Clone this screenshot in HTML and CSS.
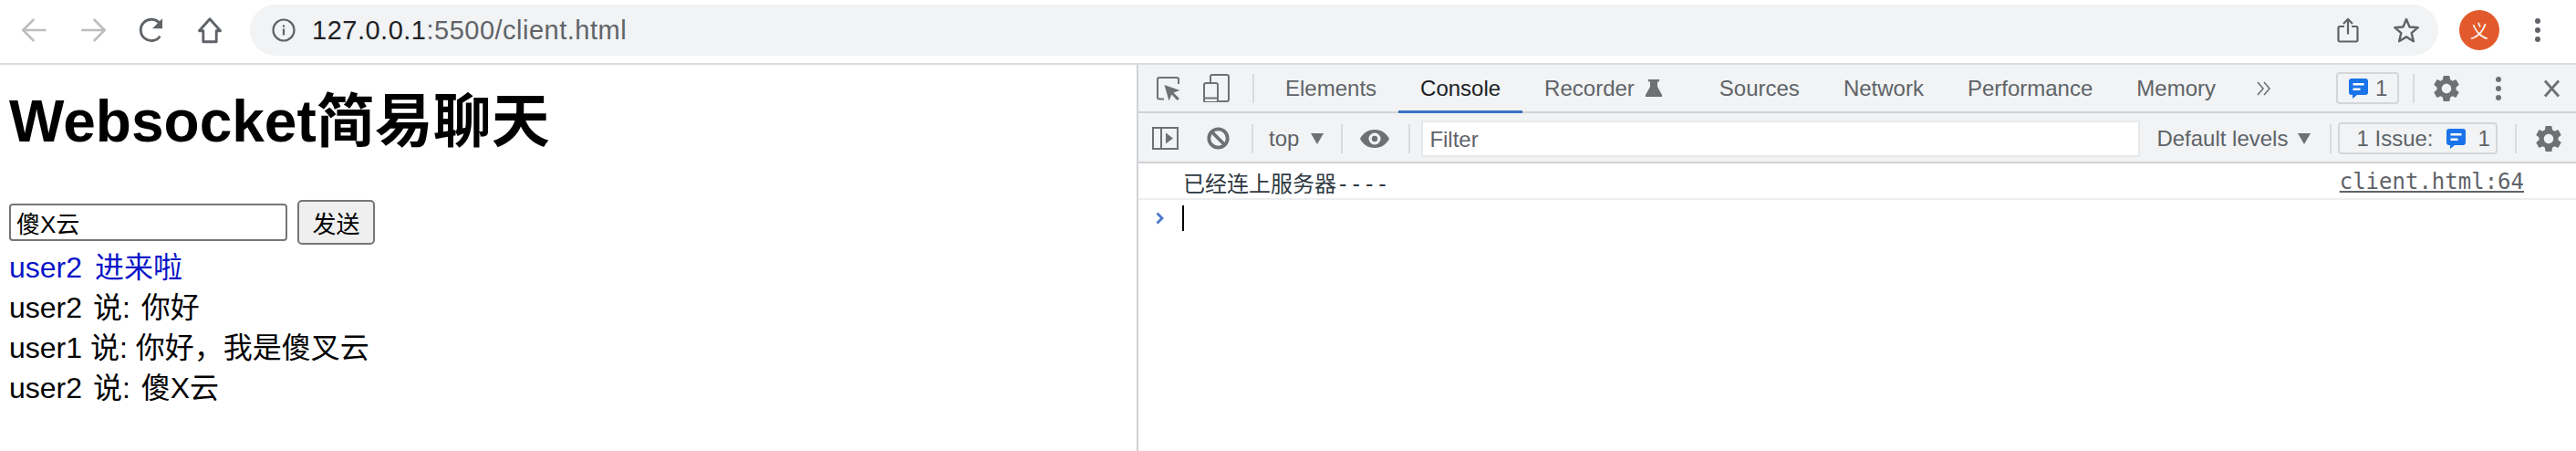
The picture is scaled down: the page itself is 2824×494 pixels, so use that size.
FILE: index.html
```html
<!DOCTYPE html>
<html lang="zh">
<head>
<meta charset="utf-8">
<title>client</title>
<link rel="stylesheet" href="styles.css">
</head>
<body>
<header class="chrome">
  <div class="nav">
    <svg viewBox="0 0 24 24" width="36" height="36"><path d="M20.500 12H4M11.500 4 3.500 12l8 8" fill="none" stroke="#bcbdbf" stroke-width="1.700"/></svg>
    <svg viewBox="0 0 24 24" width="36" height="36"><path d="M3.500 12H20M12.500 4l8 8-8 8" fill="none" stroke="#bcbdbf" stroke-width="1.700"/></svg>
    <svg viewBox="0 0 24 24" width="36" height="36"><path d="M18.300 16.500a7.800 7.800 0 1 1-.3-9.500" fill="none" stroke="#5f6368" stroke-width="1.900"/><path d="M20 3.500v7.300h-7.300z" fill="#5f6368"/></svg>
    <svg viewBox="0 0 24 24" width="36" height="36"><path d="M12 3.800 4.300 12.500H7.200v8h9.600v-8h2.900z" fill="none" stroke="#5f6368" stroke-width="1.900" stroke-linejoin="round"/></svg>
  </div>
  <div class="omnibox">
    <svg viewBox="0 0 26 26" width="26" height="26"><circle cx="13" cy="13" r="11.500" fill="none" stroke="#5f6368" stroke-width="2.200"/><path d="M11.900 7.500h2.200v2.200h-2.200zM11.900 11.500h2.200v7h-2.200z" fill="#5f6368"/></svg>
    <span class="url"><span class="host">127.0.0.1</span>:5500/client.html</span>
    <span class="omni-end">
      <svg viewBox="0 0 24 28" width="24" height="28"><path d="M8 10H3a1.500 1.500 0 0 0-1.500 1.500v13.500a1.500 1.500 0 0 0 1.500 1.500h18a1.500 1.500 0 0 0 1.500-1.500V11.500A1.500 1.500 0 0 0 21 10h-5M12 18.500V2.500M7 7l5-5 5 5" fill="none" stroke="#5f6368" stroke-width="2.200"/></svg>
      <svg viewBox="0 0 30 30" width="30" height="30"><path d="m15 3 3.500 8.500 9.200.7-7 6 2.200 9L15 22.400l-7.900 4.800 2.200-9-7-6 9.200-.7z" fill="none" stroke="#5f6368" stroke-width="2.400" stroke-linejoin="round"/></svg>
    </span>
  </div>
  <div class="avatar">义</div>
  <svg class="menu" viewBox="0 0 6 26" width="6" height="26"><circle cx="3" cy="3" r="3"/><circle cx="3" cy="13" r="3"/><circle cx="3" cy="23" r="3"/></svg>
</header>
<div class="split">
  <main class="page">
    <h1>Websocket简易聊天</h1>
    <div class="form"><input class="field" value="傻X云"><button class="send">发送</button></div>
    <div class="msgs">
      <div class="join">user2 进来啦</div>
      <div class="wide">user2 说: 你好</div>
      <div>user1 说: 你好，我是傻叉云</div>
      <div class="wide">user2 说: 傻X云</div>
    </div>
  </main>
  <section class="devtools">
    <div class="tabs">
      <div class="tool-icons">
        <svg viewBox="0 0 26 26" width="26" height="26"><path d="M8 24.500H3a2 2 0 0 1-2-2V3a2 2 0 0 1 2-2h19a2 2 0 0 1 2 2v5" fill="none" stroke="#6e7073" stroke-width="2"/><path d="m8.500 9 17 6-7 2.500 6.500 6.500-2.500 2-6-6.500-3 7z" fill="#6e7073"/></svg>
        <svg viewBox="0 0 29 31" width="29" height="31"><path d="M8 10V3a2 2 0 0 1 2-2h16a2 2 0 0 1 2 2v25a2 2 0 0 1-2 2H17" fill="none" stroke="#6e7073" stroke-width="2"/><path d="M3 10h11a2 2 0 0 1 2 2v17a2 2 0 0 1-2 2H3a2 2 0 0 1-2-2V12a2 2 0 0 1 2-2zM1 26.500h15" fill="none" stroke="#6e7073" stroke-width="2"/></svg>
        <i class="sep"></i>
      </div>
      <span class="tab">Elements</span>
      <span class="tab active">Console</span>
      <span class="tab recorder">Recorder <svg viewBox="0 0 18 19" width="18" height="19"><path d="M3 0h12v2.500h-2v5.500l5 9v2H0v-2l5-9V2.500H3z" fill="#6e7073"/></svg></span>
      <span class="tab">Sources</span>
      <span class="tab">Network</span>
      <span class="tab">Performance</span>
      <span class="tab">Memory</span>
      <svg class="more" viewBox="0 0 15 16" width="15" height="16"><path d="m1 1 6 7-6 7M8 1l6 7-6 7" fill="none" stroke="#6e7073" stroke-width="1.600"/></svg>
      <span class="tabs-end">
        <span class="badge top-badge"><svg viewBox="0 0 21 22" width="21" height="22"><path d="M3 0h15a3 3 0 0 1 3 3v12a3 3 0 0 1-3 3H9l-5 4v-4H3a3 3 0 0 1-3-3V3a3 3 0 0 1 3-3z" fill="#1a73e8"/><path d="M4.500 5h12v2.500h-12zM4.500 10.500h8V13h-8z" fill="#fff"/></svg>1</span>
        <i class="sep"></i>
        <svg class="gear" viewBox="2.400 2.400 19.200 19.200" width="28" height="28"><path fill="#6e7073" d="M19.140,12.940c0.040-0.300,0.060-0.610,0.060-0.940c0-0.320-0.020-0.640-0.070-0.940l2.030-1.580c0.180-0.140,0.230-0.410,0.120-0.610l-1.920-3.320c-0.120-0.220-0.370-0.290-0.590-0.220l-2.390,0.960c-0.500-0.380-1.030-0.700-1.620-0.940L14.400,2.810c-0.040-0.240-0.240-0.410-0.480-0.410h-3.840c-0.240,0-0.430,0.170-0.470,0.410L9.250,5.350C8.660,5.590,8.120,5.920,7.630,6.290L5.240,5.330c-0.220-0.080-0.470,0-0.590,0.220L2.740,8.870C2.620,9.080,2.660,9.340,2.860,9.480l2.030,1.580C4.840,11.360,4.800,11.690,4.800,12s0.020,0.640,0.070,0.940l-2.030,1.580c-0.180,0.140-0.230,0.410-0.120,0.610l1.920,3.320c0.120,0.220,0.370,0.290,0.590,0.220l2.390-0.960c0.500,0.380,1.030,0.700,1.620,0.940l0.360,2.540c0.050,0.240,0.240,0.410,0.480,0.410h3.840c0.240,0,0.440-0.170,0.470-0.410l0.360-2.540c0.590-0.240,1.130-0.560,1.620-0.940l2.390,0.960c0.220,0.080,0.470,0,0.590-0.220l1.920-3.320c0.120-0.220,0.070-0.470-0.120-0.610L19.140,12.940z M12,15.600c-1.980,0-3.600-1.620-3.600-3.600s1.620-3.600,3.600-3.600s3.600,1.620,3.600,3.600S13.980,15.600,12,15.600z"/></svg>
        <svg class="dots" viewBox="0 0 6 26" width="6" height="26"><circle cx="3" cy="3" r="3"/><circle cx="3" cy="13" r="3"/><circle cx="3" cy="23" r="3"/></svg>
        <svg viewBox="0 0 19 20" width="19" height="20"><path d="m2 1.500 15 17M17 1.500l-15 17" stroke="#6e7073" stroke-width="2.800" fill="none"/></svg>
      </span>
    </div>
    <div class="filterbar">
      <svg viewBox="0 0 29 25" width="29" height="25"><path d="M1 1h27v23H1zM10 1v23" fill="none" stroke="#6e7073" stroke-width="2"/><path d="m15 6.500 8 6-8 6z" fill="#6e7073"/></svg>
      <svg class="clear" viewBox="0 0 25 25" width="25" height="25"><circle cx="12.500" cy="12.500" r="10.200" fill="none" stroke="#6e7073" stroke-width="3.800"/><path d="m5.500 5.500 14 14" stroke="#6e7073" stroke-width="3.800"/></svg>
      <i class="sep"></i>
      <span class="ctx">top <b class="tri"></b></span>
      <i class="sep"></i>
      <svg class="eye" viewBox="0 0 32 20" width="32" height="20"><path fill="#6e7073" fill-rule="evenodd" d="M16 0c7.500 0 13 4 16 10-3 6-8.500 10-16 10S3 16 0 10C3 4 8.500 0 16 0zm0 3.500a6.500 6.500 0 1 0 0 13 6.500 6.500 0 0 0 0-13zm0 3.300a3.200 3.200 0 1 1 0 6.400 3.200 3.200 0 0 1 0-6.400z"/></svg>
      <i class="sep"></i>
      <div class="filter">Filter</div>
      <span class="levels">Default levels<b class="tri"></b></span>
      <i class="sep"></i>
      <span class="badge issue">1 Issue:<svg viewBox="0 0 21 22" width="21" height="22"><path d="M3 0h15a3 3 0 0 1 3 3v12a3 3 0 0 1-3 3H9l-5 4v-4H3a3 3 0 0 1-3-3V3a3 3 0 0 1 3-3z" fill="#1a73e8"/><path d="M4.500 5h12v2.500h-12zM4.500 10.500h8V13h-8z" fill="#fff"/></svg>1</span>
      <i class="sep"></i>
      <svg class="gear" viewBox="2.400 2.400 19.200 19.200" width="28" height="28"><path fill="#6e7073" d="M19.140,12.940c0.040-0.300,0.060-0.610,0.060-0.940c0-0.320-0.020-0.640-0.070-0.940l2.030-1.580c0.180-0.140,0.230-0.410,0.120-0.610l-1.920-3.320c-0.120-0.220-0.370-0.290-0.590-0.220l-2.390,0.960c-0.500-0.380-1.030-0.700-1.620-0.940L14.400,2.810c-0.040-0.240-0.240-0.410-0.480-0.410h-3.840c-0.240,0-0.430,0.170-0.470,0.410L9.250,5.350C8.660,5.590,8.120,5.920,7.630,6.290L5.240,5.330c-0.220-0.080-0.470,0-0.590,0.220L2.740,8.870C2.620,9.080,2.660,9.340,2.860,9.480l2.030,1.580C4.840,11.360,4.800,11.690,4.800,12s0.020,0.640,0.070,0.940l-2.030,1.580c-0.180,0.140-0.230,0.410-0.120,0.610l1.920,3.320c0.120,0.220,0.370,0.290,0.590,0.220l2.390-0.960c0.500,0.380,1.030,0.700,1.620,0.940l0.360,2.540c0.050,0.240,0.240,0.410,0.480,0.410h3.840c0.240,0,0.440-0.170,0.470-0.410l0.360-2.540c0.590-0.240,1.130-0.560,1.620-0.940l2.390,0.960c0.220,0.080,0.470,0,0.590-0.220l1.920-3.320c0.120-0.220,0.070-0.470-0.120-0.610L19.140,12.940z M12,15.600c-1.980,0-3.600-1.620-3.600-3.600s1.620-3.600,3.600-3.600s3.600,1.620,3.600,3.600S13.980,15.600,12,15.600z"/></svg>
    </div>
    <div class="log"><span>已经连上服务器----</span><a class="src">client.html:64</a></div>
    <div class="prompt"><svg viewBox="0 0 9 14" width="9" height="14"><path d="m1.500 1.500 5.500 5.500-5.500 5.500" fill="none" stroke="#4a78cc" stroke-width="2.800"/></svg><i class="caret"></i></div>
  </section>
</div>
</body>
</html>
```
FILE: styles.css
```css
* { box-sizing: border-box; }
html, body { margin: 0; height: 100%; overflow: hidden; background: #fff; }
body { display: flex; flex-direction: column; font-family: "Liberation Sans", "Noto Sans CJK SC", sans-serif; color: #000; }
svg { flex: none; display: block; }
i.sep { display: block; flex: none; width: 2px; height: 32px; background: #d8dadd; }

.chrome { height: 71px; flex: none; display: flex; align-items: center; background: #fff; border-bottom: 2px solid #dcdde0; padding-bottom: 3px; }
.nav { display: flex; width: 274px; flex: none; padding-left: 20px; gap: 28px; }
.omnibox { width: 2399px; flex: none; height: 56px; border-radius: 28px; background: #f1f3f4; display: flex; align-items: center; padding: 0 20px 0 24px; gap: 18px; }
.url { font-size: 29px; letter-spacing: .5px; color: #5f6368; }
.host { color: #202124; }
.omni-end { margin-left: auto; display: flex; align-items: center; gap: 37px; }
.avatar { width: 44px; height: 44px; border-radius: 50%; background: #e25a2c; color: #fff; font-size: 20px; display: flex; align-items: center; justify-content: center; margin-left: 23px; }
.menu { margin-left: 39px; fill: #5f6368; }

.split { flex: 1; display: flex; min-height: 0; }
.page { width: 1248px; flex: none; padding: 0 10px; border-right: 2px solid #d0d2d5; }
h1 { margin: 25px 0 0; font-size: 64px; line-height: 74px; font-weight: bold; }
.form { display: flex; align-items: center; margin-top: 49px; gap: 11px; }
.field { width: 305px; height: 41px; border: 2px solid #767676; border-radius: 4px; padding: 0 6px; font: 26px "Liberation Sans", "Noto Sans CJK SC", sans-serif; color: #000; background: #fff; }
.send { width: 85px; height: 49px; border: 2px solid #767676; border-radius: 5px; background: #efefef; padding: 0; font: 26px "Liberation Sans", "Noto Sans CJK SC", sans-serif; color: #000; }
.msgs { font-size: 32px; line-height: 44px; margin-top: 3px; }
.join { color: #0a14c8; word-spacing: 5px; }
.wide { word-spacing: 3px; }

.devtools { flex: 1; min-width: 0; background: #fff; font-size: 24px; color: #5f6368; }
.tabs { height: 53px; background: #f1f3f4; border-bottom: 2px solid #cfd1d4; display: flex; align-items: center; padding-left: 20px; }
.tool-icons { display: flex; align-items: center; gap: 25px; margin-right: 10px; }
.tab { height: 51px; display: flex; align-items: center; padding: 0 24px; gap: 12px; white-space: nowrap; }
.tab.active { color: #202124; height: 53px; align-self: flex-start; border-bottom: 3px solid #3a70c4; padding-top: 1px; }
.tab.recorder { margin-right: 15px; }
.more { margin-left: 21px; }
.tabs-end { margin-left: auto; display: flex; align-items: center; padding-right: 17px; }
.badge { height: 35px; display: inline-flex; align-items: center; border: 2px solid #d4d6d9; border-radius: 4px; white-space: nowrap; }
.top-badge { width: 69px; padding-left: 12px; gap: 8px; }
.tabs-end .sep { margin: 0 21px 0 15px; }
.dots { fill: #6e7073; margin: 0 46px 0 40px; }
.filterbar { height: 55px; background: #f1f3f4; border-bottom: 2px solid #cfd1d4; display: flex; align-items: center; padding: 2px 0 0 15px; }
.clear { margin: 0 24px 0 31px; }
.ctx { margin: 0 19px 0 17px; display: flex; align-items: center; gap: 13px; white-space: nowrap; }
.tri { display: block; width: 0; height: 0; border-left: 7px solid transparent; border-right: 7px solid transparent; border-top: 12px solid #6e7073; }
.eye { margin: 0 21px 0 19px; }
.filter { width: 788px; flex: none; height: 40px; margin-left: 12px; background: #fff; border: 2px solid #e6e8ea; padding-left: 7px; line-height: 37px; }
.levels { margin: 0 21px 0 18px; display: flex; align-items: center; gap: 11px; white-space: nowrap; }
.issue { width: 175px; margin: 0 19px 0 7px; padding-left: 18px; gap: 14px; }
.filterbar .gear { margin-left: 21px; }
.log { height: 40px; display: flex; align-items: center; justify-content: space-between; padding: 2px 57px 0 49px; border-bottom: 2px solid #eceef0; color: #303942; font: 24px "DejaVu Sans Mono", "Noto Sans CJK SC", monospace; }
.src { color: #5f6368; text-decoration: underline; }
.prompt { display: flex; align-items: center; gap: 20px; padding: 6px 0 0 19px; }
.caret { display: block; width: 2px; height: 28px; background: #000; }
```
